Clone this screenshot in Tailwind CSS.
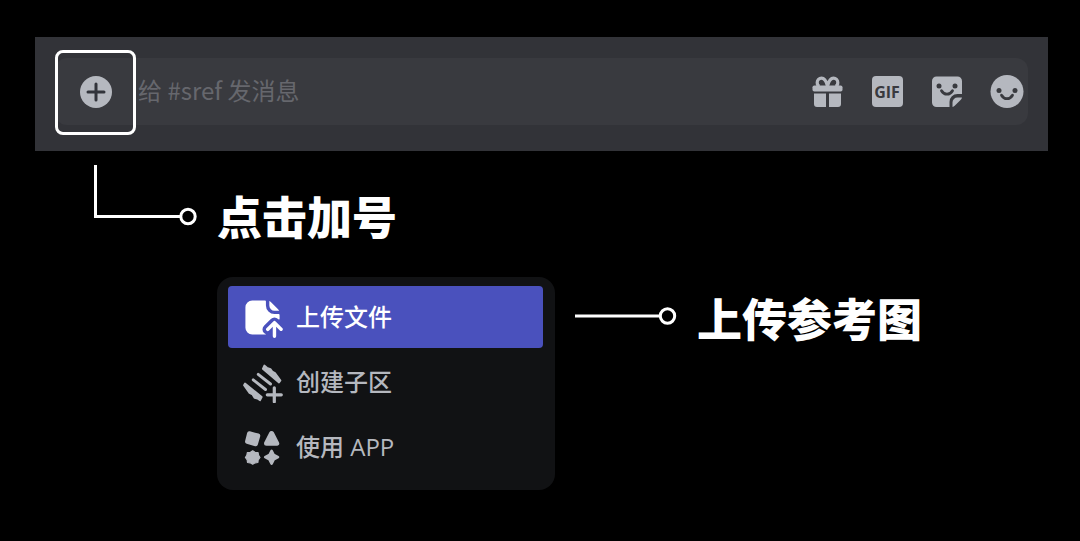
<!DOCTYPE html>
<html lang="zh-CN">
<head>
  <meta charset="UTF-8" />
  <meta name="viewport" content="width=device-width, initial-scale=1.0"/>
  <title>上传参考图</title>
  <script src="https://cdn.jsdelivr.net/npm/@tailwindcss/browser@4"></script>
</head>
<body class="bg-black min-h-screen font-['Open_Sans','Noto_Sans_CJK_SC',sans-serif]">
  <main class="pt-[37px] pb-12">

    <!-- message bar -->
    <form class="ml-[35px] mr-8 bg-[#323338] pl-5 pr-5 pt-[21px] pb-[26px]">
      <div class="flex items-center h-[67px] rounded-xl bg-[#393a3f] pr-1 text-[#b5b8bf]">
        <button type="button" aria-label="添加" class="flex shrink-0 items-center justify-center w-[81px] h-[85px] -mt-2 -mb-[10px] rounded-lg border-[3px] border-white">
          <svg class="w-[34px] h-[34px]" viewBox="0 0 34 34" fill="none">
            <circle cx="17" cy="16" r="16" fill="currentColor"/>
            <path d="M17 8v16M9 16h16" stroke="#32343b" stroke-width="3" stroke-linecap="round"/>
          </svg>
        </button>
        <input type="text" aria-label="消息" placeholder="给 #sref 发消息" class="min-w-0 flex-1 h-12 pl-[2px] pb-1 bg-transparent text-2xl text-white placeholder:text-[#66676d] outline-none font-['Noto_Sans_CJK_SC',sans-serif]">
        <div class="flex shrink-0 items-center gap-[26px]">
          <button type="button" aria-label="礼物">
            <svg class="w-[34px] h-[34px]" viewBox="0 0 34 34" fill="currentColor">
              <path d="M17.500 11c-1-4-2.500-7.800-6-7.800a4.300 4.300 0 0 0-4.300 4.300c0 2 .8 3.500 2.600 3.500M17.500 11c1-4 2.500-7.800 6-7.800a4.300 4.300 0 0 1 4.300 4.300c0 2-.8 3.500-2.600 3.500" fill="none" stroke="currentColor" stroke-width="3.200"/>
              <rect x="2.500" y="10.500" width="30" height="6" rx="1.800"/>
              <path d="M4 18.500h12v13.500h-9a3 3 0 0 1-3-3ZM19 18.500h12v10.500a3 3 0 0 1-3 3h-9Z"/>
            </svg>
          </button>
          <button type="button" class="flex items-center justify-center w-[34px] h-[34px]">
            <span class="flex items-center justify-center w-[31px] h-[31px] rounded bg-[#b5b8bf] text-[#393a3f] text-base leading-4 font-bold">GIF</span>
          </button>
          <button type="button" aria-label="贴纸">
            <svg class="w-[34px] h-[34px]" viewBox="0 0 34 34">
              <path d="M6.500 1.500h21A4.500 4.500 0 0 1 32 6v13h-4.500a8 8 0 0 0-8 8V32h-13A4.500 4.500 0 0 1 2 27.500V6A4.500 4.500 0 0 1 6.500 1.500Z" fill="currentColor"/>
              <path d="M22.500 32v-4.500a5 5 0 0 1 5-5H32a4 4 0 0 1-1.200 2.200l-6.100 6.100A4 4 0 0 1 22.500 32Z" fill="currentColor"/>
              <circle cx="9" cy="11" r="2.500" fill="#393a3f"/>
              <circle cx="25" cy="11" r="2.500" fill="#393a3f"/>
              <path d="M11.500 15.700c2.600 4.600 8.400 4.600 11 0" fill="none" stroke="#393a3f" stroke-width="2.800" stroke-linecap="round"/>
            </svg>
          </button>
          <button type="button" aria-label="表情">
            <svg class="w-[34px] h-[34px]" viewBox="0 0 34 34">
              <circle cx="17" cy="16.500" r="16.500" fill="currentColor"/>
              <circle cx="9" cy="15.500" r="2.500" fill="#393a3f"/>
              <circle cx="25" cy="15.500" r="2.500" fill="#393a3f"/>
              <path d="M11.500 20.200c2.600 4.600 8.400 4.600 11 0" fill="none" stroke="#393a3f" stroke-width="2.800" stroke-linecap="round"/>
            </svg>
          </button>
        </div>
      </div>
    </form>

    <!-- step 1 -->
    <section class="flex items-start gap-5 pl-[94px] pt-[14px]">
      <svg class="w-[103px] h-[61px] shrink-0" viewBox="0 0 103 61" fill="none" stroke="#fff" stroke-width="3">
        <path d="M1.500 0v51.500H86"/>
        <circle cx="94" cy="51.500" r="7.200"/>
      </svg>
      <h2 class="mt-7 mb-[2px] text-[45px] leading-[46px] font-black text-white font-['Noto_Sans_CJK_SC',sans-serif]">点击加号</h2>
    </section>

    <!-- step 2 -->
    <section class="flex items-start gap-5 pl-[217px] pt-9">
      <ul class="w-[338px] shrink-0 rounded-2xl bg-[#111214] pl-[11px] pr-3 pt-[9px] pb-3 space-y-[3px] text-2xl font-medium text-[#b5b8bf]">
        <li>
          <button type="button" class="flex items-center gap-[13px] w-full h-[62px] pl-[14px] rounded bg-[#4a51bd] text-white">
            <svg class="w-[41px] h-[41px]" viewBox="0 0 24 24" fill="currentColor">
              <path d="M13.820 21.700c.17.05.14.3-.04.3H6a4 4 0 0 1-4-4V6a4 4 0 0 1 4-4h7.500c.28 0 .5.22.5.5V5a5 5 0 0 0 5 5h2.500c.28 0 .5.22.5.5v2.300a.4.4 0 0 1-.68.27l-.2-.2a3 3 0 0 0-4.240 0l-4 4a3 3 0 0 0 0 4.250c.3.3.6.46.94.58Z"/>
              <path d="M21.660 8c.03 0 .05-.03.04-.06a3 3 0 0 0-.58-.82l-4.240-4.240a3 3 0 0 0-.82-.58.04.04 0 0 0-.06.04V5a3 3 0 0 0 3 3h2.660Z"/>
              <path d="M18.300 14.300a1 1 0 0 1 1.400 0l4 4a1 1 0 0 1-1.400 1.400L20 17.420V23a1 1 0 1 1-2 0v-5.590l-2.300 2.300a1 1 0 0 1-1.400-1.420l4-4Z"/>
            </svg>
            <span>上传文件</span>
          </button>
        </li>
        <li>
          <button type="button" class="flex items-center gap-[13px] w-full h-[62px] pl-[14px] rounded">
            <svg class="w-[41px] h-[41px]" viewBox="0 0 41 41" fill="currentColor" stroke="currentColor" stroke-linecap="round" stroke-linejoin="round">
              <path d="M22.300 3.500 25 5.800 28.500 7 30.300 9.500 33 11 38.500 18.500 37 20.500 20.800 6.800Z" stroke-width="1.800"/>
              <path d="M3 21.500 19.700 35 18 38.300 15.500 36.500 12.500 35.800 10.500 32.500 7.500 31 2 23.200Z" stroke-width="1.800"/>
              <path d="M16.200 12.300 28.500 22M11.200 17.800 23.500 27.500" stroke-width="2.900" fill="none"/>
              <path d="M32.300 25.800v14M25.300 32.800h14" stroke-width="3.200"/>
            </svg>
            <span>创建子区</span>
          </button>
        </li>
        <li>
          <button type="button" class="flex items-center gap-[13px] w-full h-[62px] pl-[14px] rounded">
            <svg class="w-[41px] h-[41px]" viewBox="0 0 41 41" fill="currentColor" stroke="currentColor" stroke-linejoin="round">
              <path d="M7.300 6.500 16 8.800 13.700 17 5.300 14.500Z" stroke-width="4.500"/>
              <path d="M29.600 6.500 34.700 16.300H24.500Z" stroke-width="5"/>
              <path d="M10.700 23.800 13 25.300 16 25.500 16.600 28.300 18 30.500 16.200 32.800 15.900 35.500 13.200 35.800 10.700 37.200 8.200 35.800 5.500 35.500 5.200 32.800 3.400 30.500 4.800 28.300 5.400 25.500 8.400 25.300Z" stroke-width="1.200"/>
              <path d="M29.600 23.800 31.800 28 36 30.200 31.800 32.400 29.600 36.600 27.400 32.400 23.200 30.200 27.400 28Z" stroke-width="2.600"/>
            </svg>
            <span>使用 APP</span>
          </button>
        </li>
      </ul>
      <div class="flex items-start gap-5 pt-[18px]">
        <svg class="w-[102px] h-[42px] shrink-0" viewBox="0 0 102 42" fill="none" stroke="#fff" stroke-width="3">
          <path d="M0 21h85"/>
          <circle cx="92.500" cy="21" r="7.200"/>
        </svg>
        <h2 class="whitespace-nowrap text-[45px] leading-[46px] font-black text-white font-['Noto_Sans_CJK_SC',sans-serif]">上传参考图</h2>
      </div>
    </section>

  </main>
</body>
</html>
